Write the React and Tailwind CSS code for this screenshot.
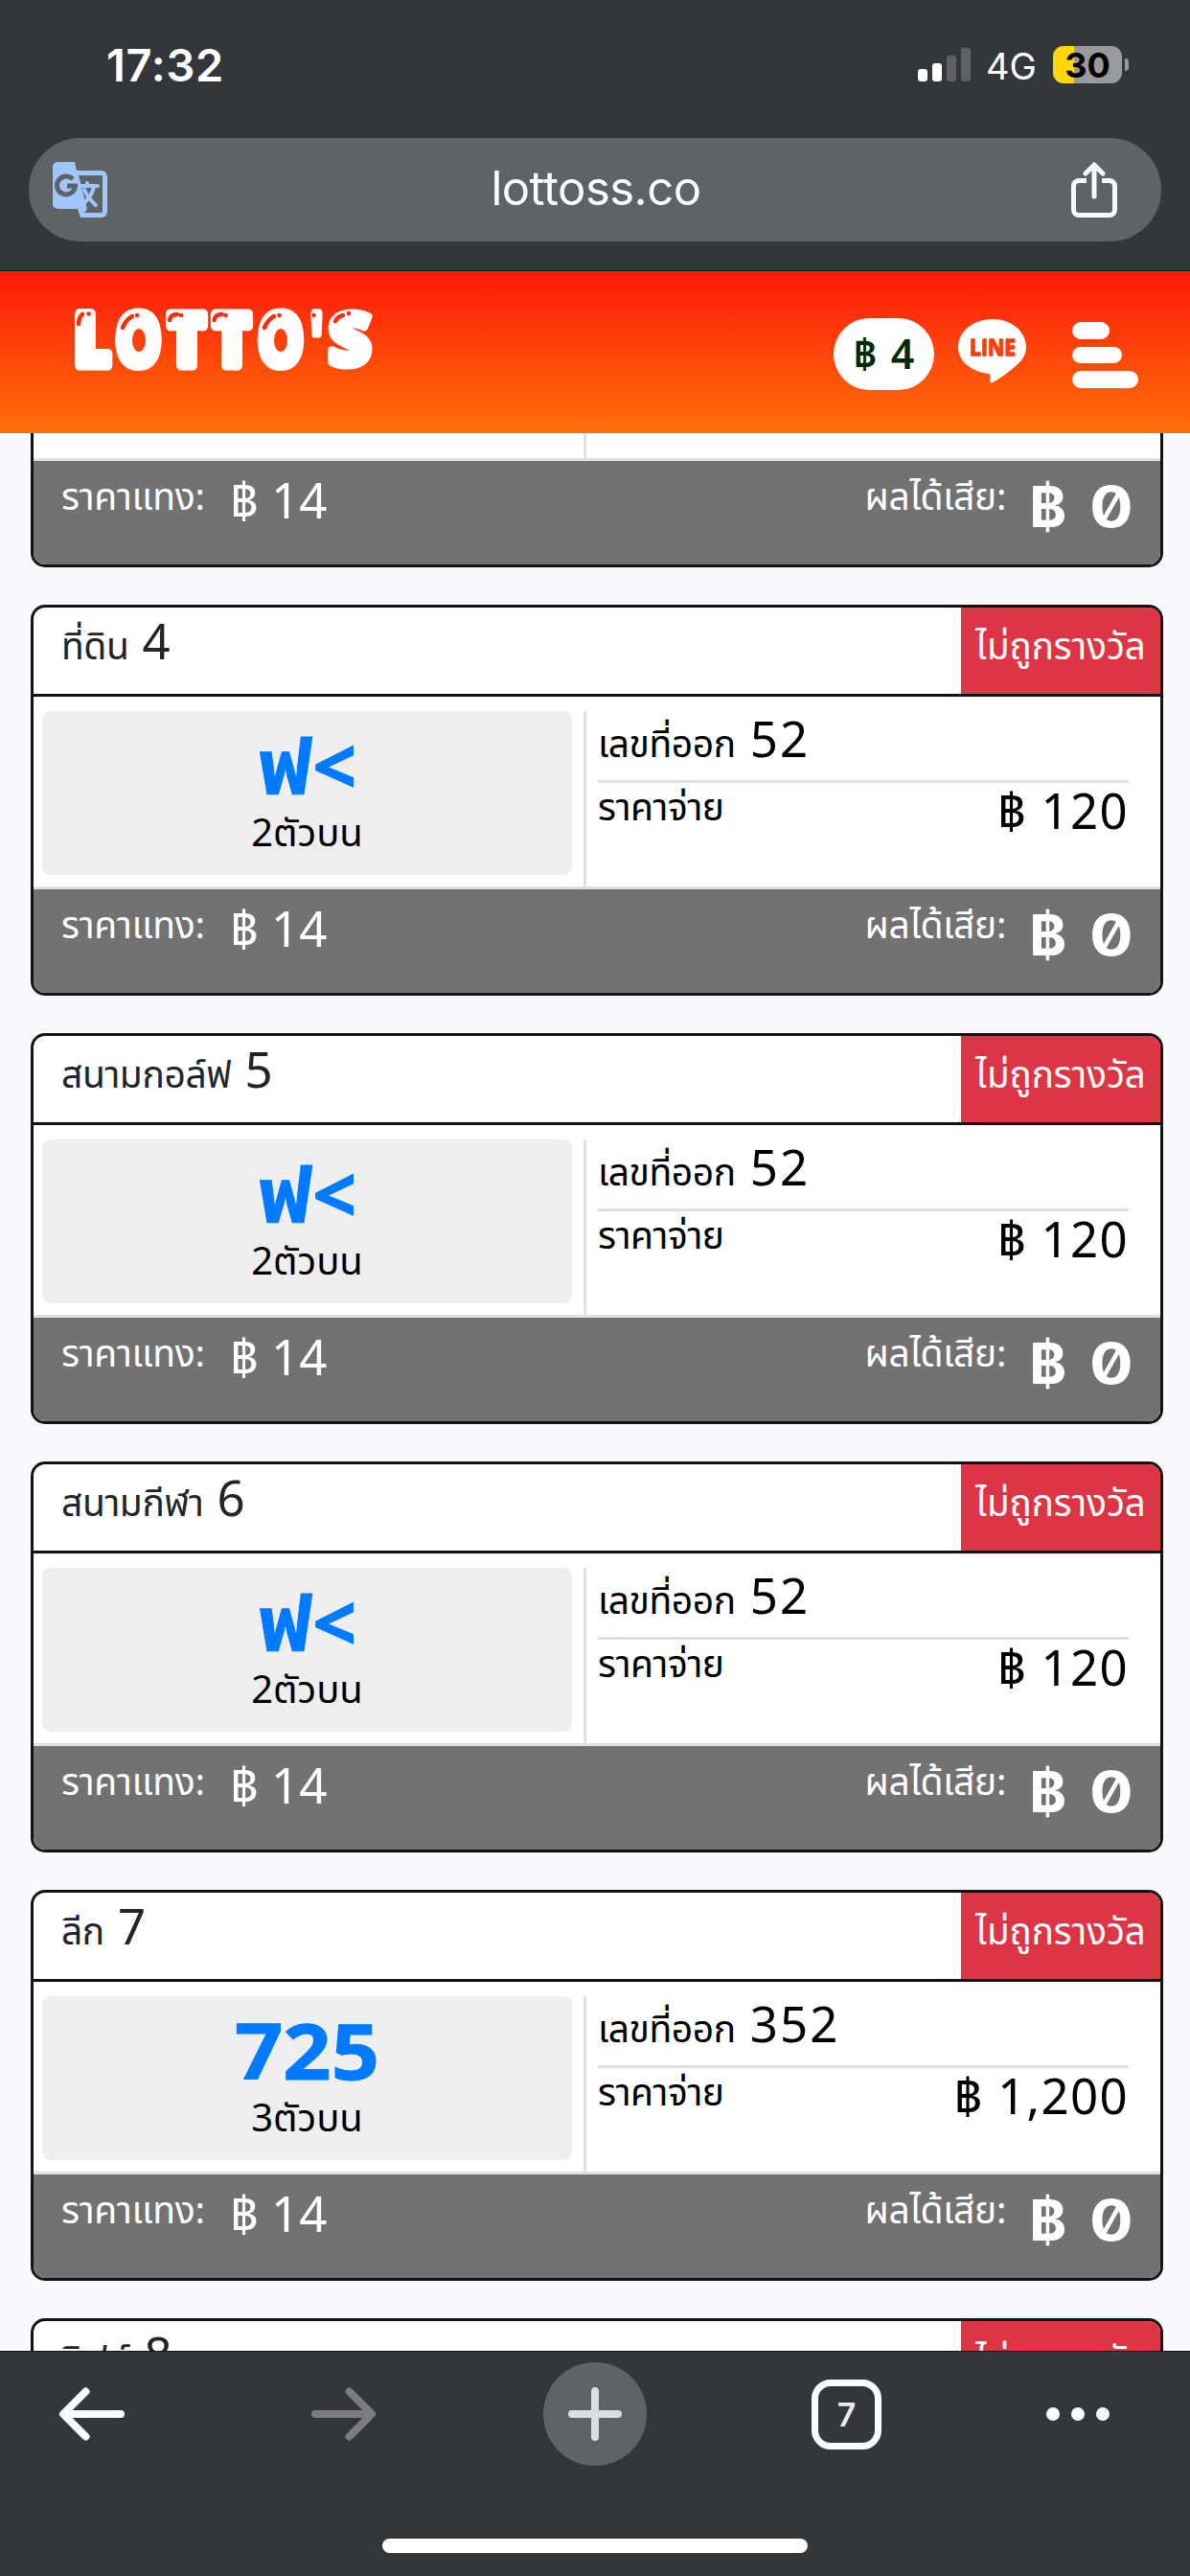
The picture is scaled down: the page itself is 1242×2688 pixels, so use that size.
import React from "react";

const bets = [
  { name: "ที่ดิน", no: 4, pick: "ฟ<", type: "2ตัวบน", result: "52", pay: "120" },
  { name: "สนามกอล์ฟ", no: 5, pick: "ฟ<", type: "2ตัวบน", result: "52", pay: "120" },
  { name: "สนามกีฬา", no: 6, pick: "ฟ<", type: "2ตัวบน", result: "52", pay: "120" },
  { name: "ลีก", no: 7, pick: "725", type: "3ตัวบน", result: "352", pay: "1,200" },
];

// Logo letters: [char, x, width, stroke]
const logoLetters = [
  ["L", 4, 37, 11],
  ["O", 47.5, 46, 11],
  ["T", 102, 38, 11],
  ["T", 149, 38, 11],
  ["O", 196, 46, 11],
  ["'", 251, 11, 11],
  ["S", 269, 44, 8],
];

const Logo = () => (
  <svg width="320" height="76" viewBox="0 0 320 76" className="mt-[33px] ml-[74px] overflow-visible">
    <g
      fill="#fff"
      stroke="#fff"
      strokeLinejoin="round"
      fontFamily="Open Sans, sans-serif"
      fontWeight="800"
      fontSize="75"
    >
      {logoLetters.map(([char, x, width, stroke], i) => (
        <text key={i} x={x} y="65" strokeWidth={stroke} textLength={width} lengthAdjust="spacingAndGlyphs">
          {char}
        </text>
      ))}
    </g>
    {/* Holes of the two O's */}
    <g fill="#ff400b">
      <ellipse cx="71" cy="39" rx="7" ry="12" />
      <ellipse cx="219" cy="39" rx="7" ry="12" />
    </g>
    {/* Shine marks */}
    <g fill="none" stroke="#ff2b0b" strokeWidth="4.5" strokeLinecap="round">
      <path d="M8 22q0-7 4-10M18.500 11.500h.1M54 26q3-8 10-12M69 13h.1M103 18q1-6 8-6M115 13h.1M149.500 18q1-6 8-6M161.500 13h.1M202 26q3-8 10-12M217.500 13h.1M253.500 13h.1M276 19q3-5 8-6M290 11h.1" />
    </g>
  </svg>
);

const StatusBar = () => (
  <div className="flex h-[144px] items-start pt-12 font-['Inter',sans-serif] text-white">
    <span className="ml-[111px] text-[47px] leading-[40px] font-semibold tracking-[0.7px]">17:32</span>
    <div className="ml-auto flex h-[37px] items-end gap-[5px]">
      <i className="h-[13px] w-[10px] rounded-[3px] bg-white" />
      <i className="h-[19px] w-[10px] rounded-[3px] bg-white" />
      <i className="h-[27px] w-[10px] rounded-[3px] bg-[#5f6062]" />
      <i className="h-[35px] w-[10px] rounded-[3px] bg-[#5f6062]" />
    </div>
    <span className="ml-[16px] w-[70px] text-[38px] leading-[42px]">4G</span>
    <div className="flex h-[39px] w-[72px] items-center justify-center rounded-[11px] bg-linear-to-r from-[#ffd60a] from-30% to-[#9a9a9c] to-30% text-[36px] leading-none font-bold text-black">
      30
    </div>
    <i className="mt-[13px] mr-[64px] ml-[3px] h-[13px] w-[4px] rounded-r-full bg-[#9a9a9c]" />
  </div>
);

const AddressBar = () => (
  <div className="mr-[30px] ml-[30px] flex h-[108px] items-center rounded-full bg-[#5e6366] pr-[45px] pl-[25px] text-white">
    <svg width="57" height="58" viewBox="0 0 57 58">
      <path
        fill="#a0c6fc"
        d="M5 0h18l2 9h26a6 6 0 0 1 6 6v37a6 6 0 0 1-6 6H29l-3-9H5a5 5 0 0 1-5-5V5a5 5 0 0 1 5-5zM27 14l9 35-3 4h18a1 1 0 0 0 1-1V15a1 1 0 0 0-1-1z"
      />
      <path
        fill="none"
        stroke="#5e6366"
        strokeWidth="5"
        d="M21 18a9.500 9.500 0 1 0 2.500 7H15"
      />
      <path
        fill="none"
        stroke="#a0c6fc"
        strokeWidth="4"
        strokeLinecap="round"
        d="M29 25h18M36 22v3M43 26q-3 12-12 18M33 29q4 9 12 16"
      />
    </svg>
    <span className="flex-1 pb-[3px] pl-[15px] text-center font-['Inter',sans-serif] text-[49px] leading-none tracking-[-0.5px]">
      lottoss.co
    </span>
    <svg width="50" height="58" viewBox="0 0 50 58" fill="none" stroke="#f8f9ff" strokeWidth="5" strokeLinecap="round">
      <path d="M17 19.500H9a5.500 5.500 0 0 0-5.500 5.500v25A5.500 5.500 0 0 0 9 55.500h32a5.500 5.500 0 0 0 5.500-5.500V25a5.500 5.500 0 0 0-5.500-5.500h-8" strokeLinecap="butt" />
      <path d="M25 36V4M16 12l9-9 9 9" strokeLinejoin="round" />
    </svg>
  </div>
);

const SiteHeader = () => (
  <header className="flex h-[169px] items-start bg-linear-to-b/srgb from-[#ff1a0a] to-[#ff6f0a]">
    <Logo />
    <div className="mt-[49px] ml-auto flex h-[75px] w-[105px] items-center justify-center rounded-full bg-white text-[43px] font-semibold text-[#002b00] [word-spacing:3px]">
      ฿ 4
    </div>
    <svg width="72" height="68" viewBox="0 0 72 68" className="mt-[50px] ml-[25px]">
      <path fill="#fff" d="M36 0c20 0 35 13 35 29 0 8-4 14-10 19C52 56 42 63 36 66c-3 1-3-1-2.500-4 .5-3 0-5-4-5.500C12 54 0 43 0 29 0 13 16 0 36 0z" />
      <text
        x="12"
        y="37.500"
        textLength="48"
        lengthAdjust="spacingAndGlyphs"
        fill="#ff3d0a"
        stroke="#ff3d0a"
        strokeWidth="1.500"
        strokeLinejoin="round"
        fontFamily="Open Sans, sans-serif"
        fontWeight="700"
        fontSize="24"
      >
        LINE
      </text>
    </svg>
    <div className="mt-[53px] mr-[53px] ml-[47px] flex w-[70px] flex-col gap-2">
      <i className="h-[18px] w-[39px] rounded-full bg-white" />
      <i className="h-[17px] w-[52px] rounded-full bg-white" />
      <i className="h-[18px] w-[69px] rounded-full bg-white" />
    </div>
  </header>
);

const CardFooter = () => (
  <div className="flex h-[111px] items-start border-t-[3px] border-[#dee2e6] bg-[#727272] pr-[29px] pl-[29px] text-white">
    <span className="w-[176px] text-[39px] leading-[72px] tracking-[-0.3px]">ราคาแทง:</span>
    <span className="text-[51px] leading-[81px]">฿ 14</span>
    <span className="ml-auto text-[39px] leading-[72px] tracking-[-0.3px]">ผลได้เสีย:</span>
    <span className="ml-[24px] flex gap-[27px] pr-[2px] font-['Inter',sans-serif] text-[59px] leading-[96px] font-bold slashed-zero">
      <span>฿</span>
      <span className="scale-x-115">0</span>
    </span>
  </div>
);

const CardHead = ({ name, no }) => (
  <div className="flex h-[93px] shrink-0 border-b-[3px] border-[#111315]">
    <div className="flex flex-1 items-baseline gap-[14px] pl-[29px] text-[#212529]">
      <span className="text-[39px] leading-[68px] tracking-[-0.4px]">{name}</span>
      <span className="text-[51px] leading-[68px]">{no}</span>
    </div>
    <div className="w-[208px] bg-[#dc3545] text-center text-[38.5px] leading-[78px] whitespace-nowrap text-white">
      ไม่ถูกรางวัล
    </div>
  </div>
);

const BetCard = ({ bet }) => (
  <div className="h-[408px] shrink-0 overflow-hidden rounded-[15px] border-[3px] border-[#111315] bg-white">
    <CardHead name={bet.name} no={bet.no} />
    <div className="flex h-[198px] pt-[15px] pl-[9px] text-black">
      <div className="h-[171px] w-[553px] rounded-[9px] bg-[#eee] text-center">
        <p
          className={
            bet.pick.length === 3
              ? "scale-x-110 text-[80px] leading-[112px] font-bold text-[#007bff] [-webkit-text-stroke:1px_#007bff]"
              : "text-[80px] leading-[112px] font-bold text-[#007bff] [-webkit-text-stroke:1px_#007bff]"
          }
        >
          {bet.pick}
        </p>
        <p className="text-[40px] leading-[27px]">{bet.type}</p>
      </div>
      <div className="mr-[33px] ml-[12px] flex-1 border-l-[3px] border-[#dee2e6] pl-[12px]">
        <div className="flex h-[75px] items-baseline gap-[15px] border-b-[3px] border-[#dee2e6]">
          <span className="text-[39px] leading-[56px] tracking-[-0.4px]">เลขที่ออก</span>
          <span className="text-[51px] leading-[56px] tracking-[2px]">{bet.result}</span>
        </div>
        <div className="flex items-start justify-between">
          <span className="text-[39px] leading-[48px] tracking-[-0.4px]">ราคาจ่าย</span>
          <span className="text-[51px] leading-[57px] tracking-[1.3px]">฿ {bet.pay}</span>
        </div>
      </div>
    </div>
    <CardFooter />
  </div>
);

const Toolbar = () => (
  <nav className="h-[235px] border-t border-[#141618] bg-[#33373a]">
    <div className="flex items-center pt-[11px] pr-[84px] pl-[61px]">
      <svg width="69" height="60" viewBox="0 0 69 60" fill="none" stroke="#fbfcff" strokeWidth="8" strokeLinecap="round" strokeLinejoin="round">
        <path d="M65 30H7M28.500 6.500L5 30l23.500 23.500" />
      </svg>
      <svg width="69" height="60" viewBox="0 0 69 60" className="ml-[194px]" fill="none" stroke="#7d7d7f" strokeWidth="8" strokeLinecap="round" strokeLinejoin="round">
        <path d="M5 30h58M40.500 6.500L64 30 40.500 53.500" />
      </svg>
      <div className="ml-[174px] flex h-[108px] w-[108px] items-center justify-center rounded-full bg-[#5e6366]">
        <svg width="56" height="56" viewBox="0 0 56 56" stroke="#dcdde1" strokeWidth="8" strokeLinecap="round">
          <path d="M28 4v48M4 28h48" />
        </svg>
      </div>
      <div className="ml-[172px] flex h-[73px] w-[73px] items-center justify-center rounded-[20px] border-[7px] border-[#fbfcff] font-['Inter',sans-serif] text-[34px] font-semibold text-[#e8eaed]">
        7
      </div>
      <div className="ml-auto flex gap-[12px]">
        <i className="h-[14px] w-[14px] rounded-full bg-[#fbfcff]" />
        <i className="h-[14px] w-[14px] rounded-full bg-[#fbfcff]" />
        <i className="h-[14px] w-[14px] rounded-full bg-[#fbfcff]" />
      </div>
    </div>
    <div className="mx-auto mt-[76px] h-[15px] w-[444px] rounded-full bg-white" />
  </nav>
);

const App = () => {
  return (
    <div className="h-[2688px] w-[1242px] overflow-hidden bg-[#f8f9fc] font-['Noto_Sans','Noto_Sans_Thai',sans-serif]">
      <div className="h-[283px] border-b border-[#141618] bg-[#33373a]">
        <StatusBar />
        <AddressBar />
      </div>
      <SiteHeader />
      <main className="flex h-[2001px] flex-col gap-[39px] overflow-hidden pr-[28px] pl-[32px]">
        {/* Card scrolled under the header */}
        <div className="h-[140px] shrink-0 overflow-hidden rounded-b-[15px] border-x-[3px] border-b-[3px] border-[#111315] bg-white">
          <div className="h-[26px] pl-[574px]">
            <div className="h-full w-[3px] bg-[#dee2e6]" />
          </div>
          <CardFooter />
        </div>
        {bets.map((bet) => (
          <BetCard key={bet.no} bet={bet} />
        ))}
        {/* Card cut off by the toolbar */}
        <div className="h-[120px] shrink-0 overflow-hidden rounded-t-[15px] border-x-[3px] border-t-[3px] border-[#111315] bg-white">
          <CardHead name="ลิฟต์" no={8} />
        </div>
      </main>
      <Toolbar />
    </div>
  );
};

export default App;
